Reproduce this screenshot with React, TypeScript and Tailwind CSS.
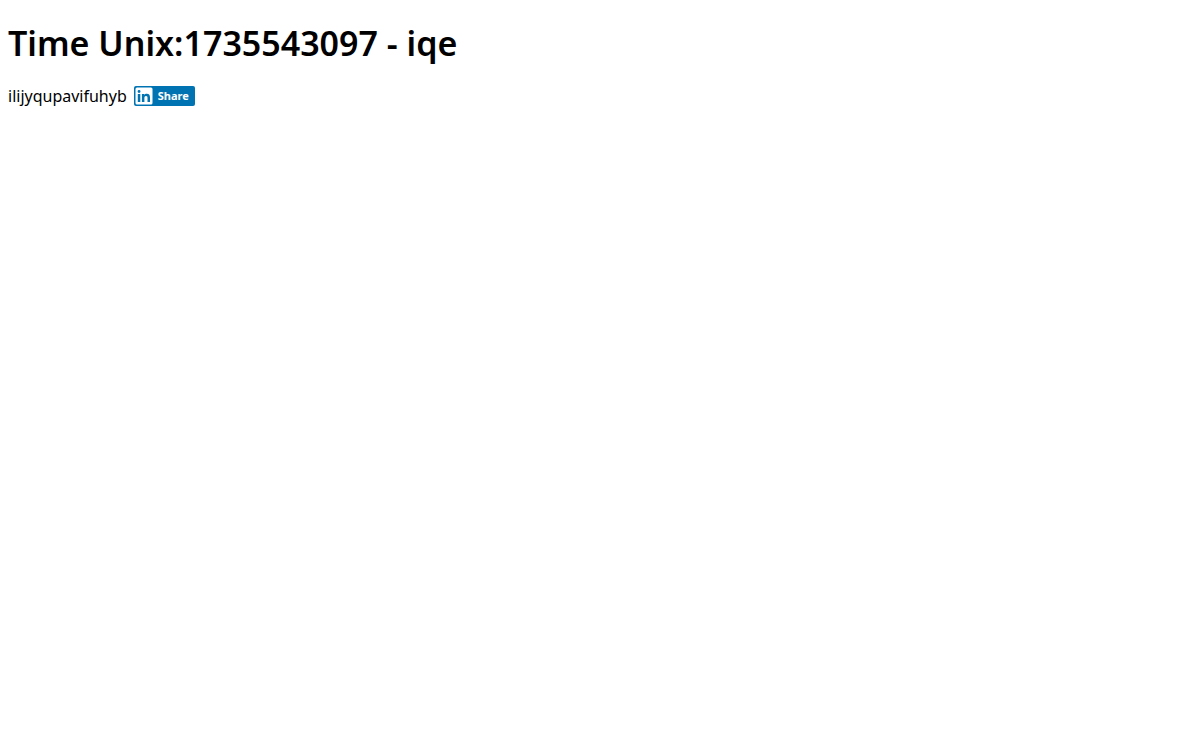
const TIMESTAMP = 1735543097;

function LinkedInMark() {
  return (
    <svg width="20" height="20" viewBox="0 0 20 20" aria-hidden="true">
      <rect x="1.5" y="1.5" width="17" height="17" rx="1.5" fill="#fff" />
      <path
        fill="#0073b2"
        d="M3.8 8h2.5v8H3.8zM5.05 4a1.45 1.45 0 1 1 0 2.9 1.45 1.45 0 0 1 0-2.9zM7.9 8h2.4v1.1c.4-.8 1.3-1.3 2.5-1.3 2.5 0 3.2 1.5 3.2 3.7V16h-2.5v-4c0-1.2-.2-2.1-1.5-2.1-1.2 0-1.6.8-1.6 2V16H7.9z"
      />
    </svg>
  );
}

export default function App() {
  return (
    <main className="min-h-screen bg-white px-2 pt-5 font-['Noto_Sans','Open_Sans',sans-serif] text-black">
      <h1 className="text-[34px] leading-[46px] font-semibold">Time Unix:{TIMESTAMP} - iqe</h1>
      <div className="mt-5 flex items-center gap-[7px]">
        <span className="text-base leading-5">ilijyqupavifuhyb</span>
        <button type="button" className="flex h-5 items-center rounded-xs bg-[#0073b2] pr-1.5 text-white">
          <LinkedInMark />
          <span className="pl-1 text-[11px] font-bold">Share</span>
        </button>
      </div>
    </main>
  );
}
